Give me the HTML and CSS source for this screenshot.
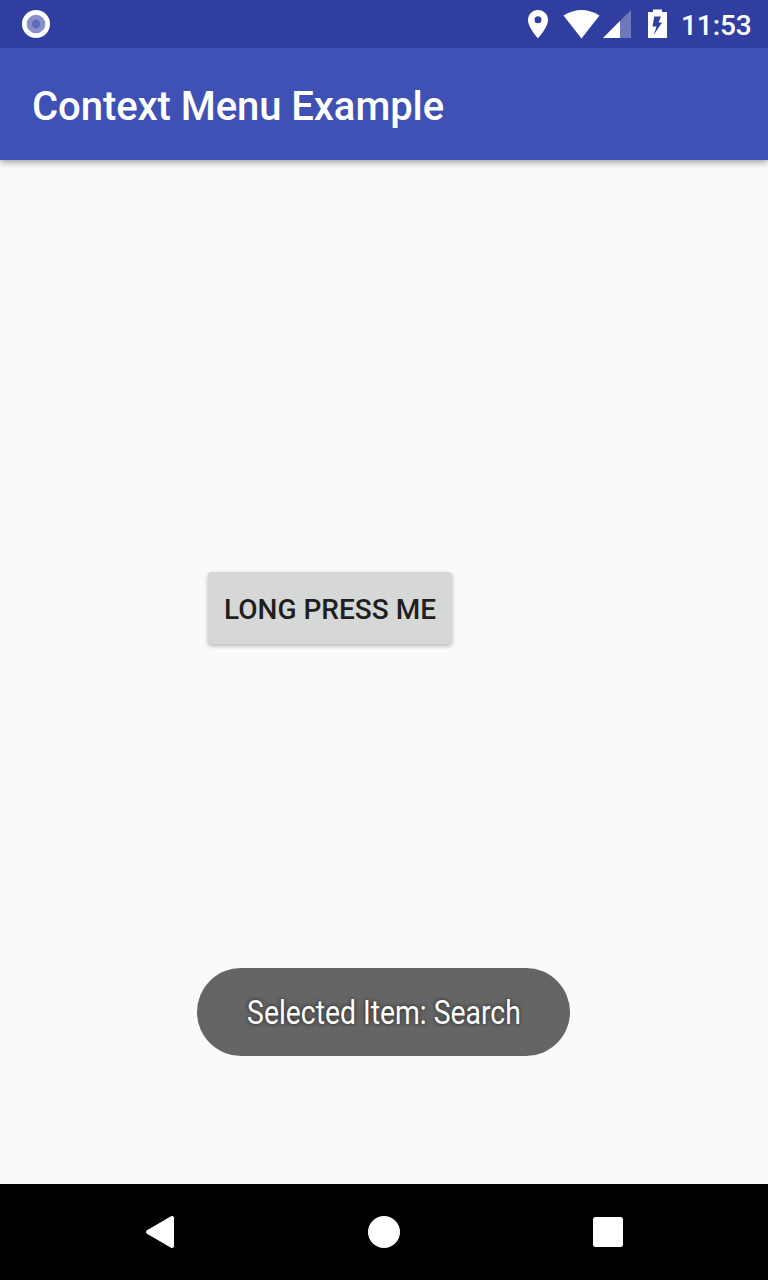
FILE: index.html
```html
<!DOCTYPE html>
<html lang="en">
<head>
<meta charset="utf-8">
<title>Context Menu Example</title>
<link rel="stylesheet" href="styles.css">
</head>
<body>
<div class="screen">
  <header class="status">
    <svg class="notice" width="28" height="28" viewBox="0 0 28 28"><circle cx="14" cy="14" r="14" fill="#fff"/><circle cx="14" cy="14" r="9.3" fill="#8790ca"/><circle cx="14" cy="14" r="4.200" fill="#5f6bb8"/></svg>
    <svg class="icons" width="150" height="48" viewBox="520 0 150 48" fill="#fff">
      <path fill-rule="evenodd" d="M538 10c-5.600 0-10 4.400-10 10 0 7.400 10 18.300 10 18.300s10-10.900 10-18.300c0-5.600-4.400-10-10-10zm0 6.200a3.500 3.500 0 1 1 0 7 3.500 3.500 0 0 1 0-7z"/>
      <path d="M563.500 15.500Q581.500 4.500 599.500 15.500L581.500 38.500Z"/>
      <path d="M603 38L631 10V38Z" opacity=".3"/><path d="M603 38L620 21V38Z"/>
      <path fill-rule="evenodd" d="M653 9.500h9V12h5v26h-19V12h5zM654.300 16.500L652.500 26.500H656.500L653.700 35L662 22.500H658.500L661 16.500Z"/>
    </svg>
    <time class="clock">11:53</time>
  </header>
  <div class="appbar"><h1 class="title">Context Menu Example</h1></div>
  <main class="content">
    <button class="press">LONG PRESS ME</button>
    <div class="toast"><span class="message">Selected Item: Search</span></div>
  </main>
  <nav class="nav">
    <svg class="navicon" width="32" height="34" viewBox="0 0 32 34"><path d="M4 17L28 3V31Z" fill="#fff" stroke="#fff" stroke-width="4" stroke-linejoin="round"/></svg>
    <svg class="navicon" width="32" height="32" viewBox="0 0 32 32"><circle cx="16" cy="16" r="16" fill="#fff"/></svg>
    <svg class="navicon" width="32" height="32" viewBox="0 0 32 32"><rect x="1" y="1" width="30" height="30" rx="2.500" fill="#fff"/></svg>
  </nav>
</div>
</body>
</html>
```
FILE: styles.css
```css
body { margin: 0; font-family: Roboto, sans-serif; }
.screen { width: 768px; height: 1280px; display: flex; flex-direction: column; background: #fafafa; overflow: hidden; }
.status { height: 48px; box-sizing: border-box; padding: 0 16px 0 22px; display: flex; align-items: center; background: #303f9f; color: #fff; position: relative; z-index: 2; }
.notice { margin-right: auto; }
.icons { margin-right: 11px; }
.clock { font-size: 28px; font-weight: 500; line-height: 46px; width: 71px; white-space: nowrap; padding-top: 4px; letter-spacing: -.1px; }
.appbar { height: 112px; box-sizing: border-box; padding: 5px 32px 0; display: flex; align-items: center; background: #3f51b5; box-shadow: 0 2px 7px rgba(0,0,0,.4); z-index: 1; }
.title { margin: 0; font-size: 40px; font-weight: 500; color: #fff; white-space: nowrap; letter-spacing: -.06px; }
.content { flex: 1; display: flex; flex-direction: column; align-items: flex-start; padding-top: 412px; }
.press { width: 244px; height: 72px; margin: 0 0 0 208px; padding: 2px 0 0; border: 0; border-radius: 4px; background: #d6d7d7; color: #1f1f1f; font: 500 28px Roboto, sans-serif; white-space: nowrap; box-shadow: 0 2px 4px rgba(0,0,0,.28); }
.toast { width: 373px; height: 88px; margin: 324px 0 0 197px; border-radius: 44px; background: #656565; color: #fff; display: flex; align-items: center; justify-content: center; }
.message { font-size: 32.5px; white-space: nowrap; transform: scaleX(.872); text-shadow: 0 0 5px rgba(0,0,0,.7); padding-top: 2px; }
.nav { height: 96px; box-sizing: border-box; padding: 0 144px; display: flex; align-items: center; justify-content: space-between; background: #000; }
.navicon { display: block; }
```
